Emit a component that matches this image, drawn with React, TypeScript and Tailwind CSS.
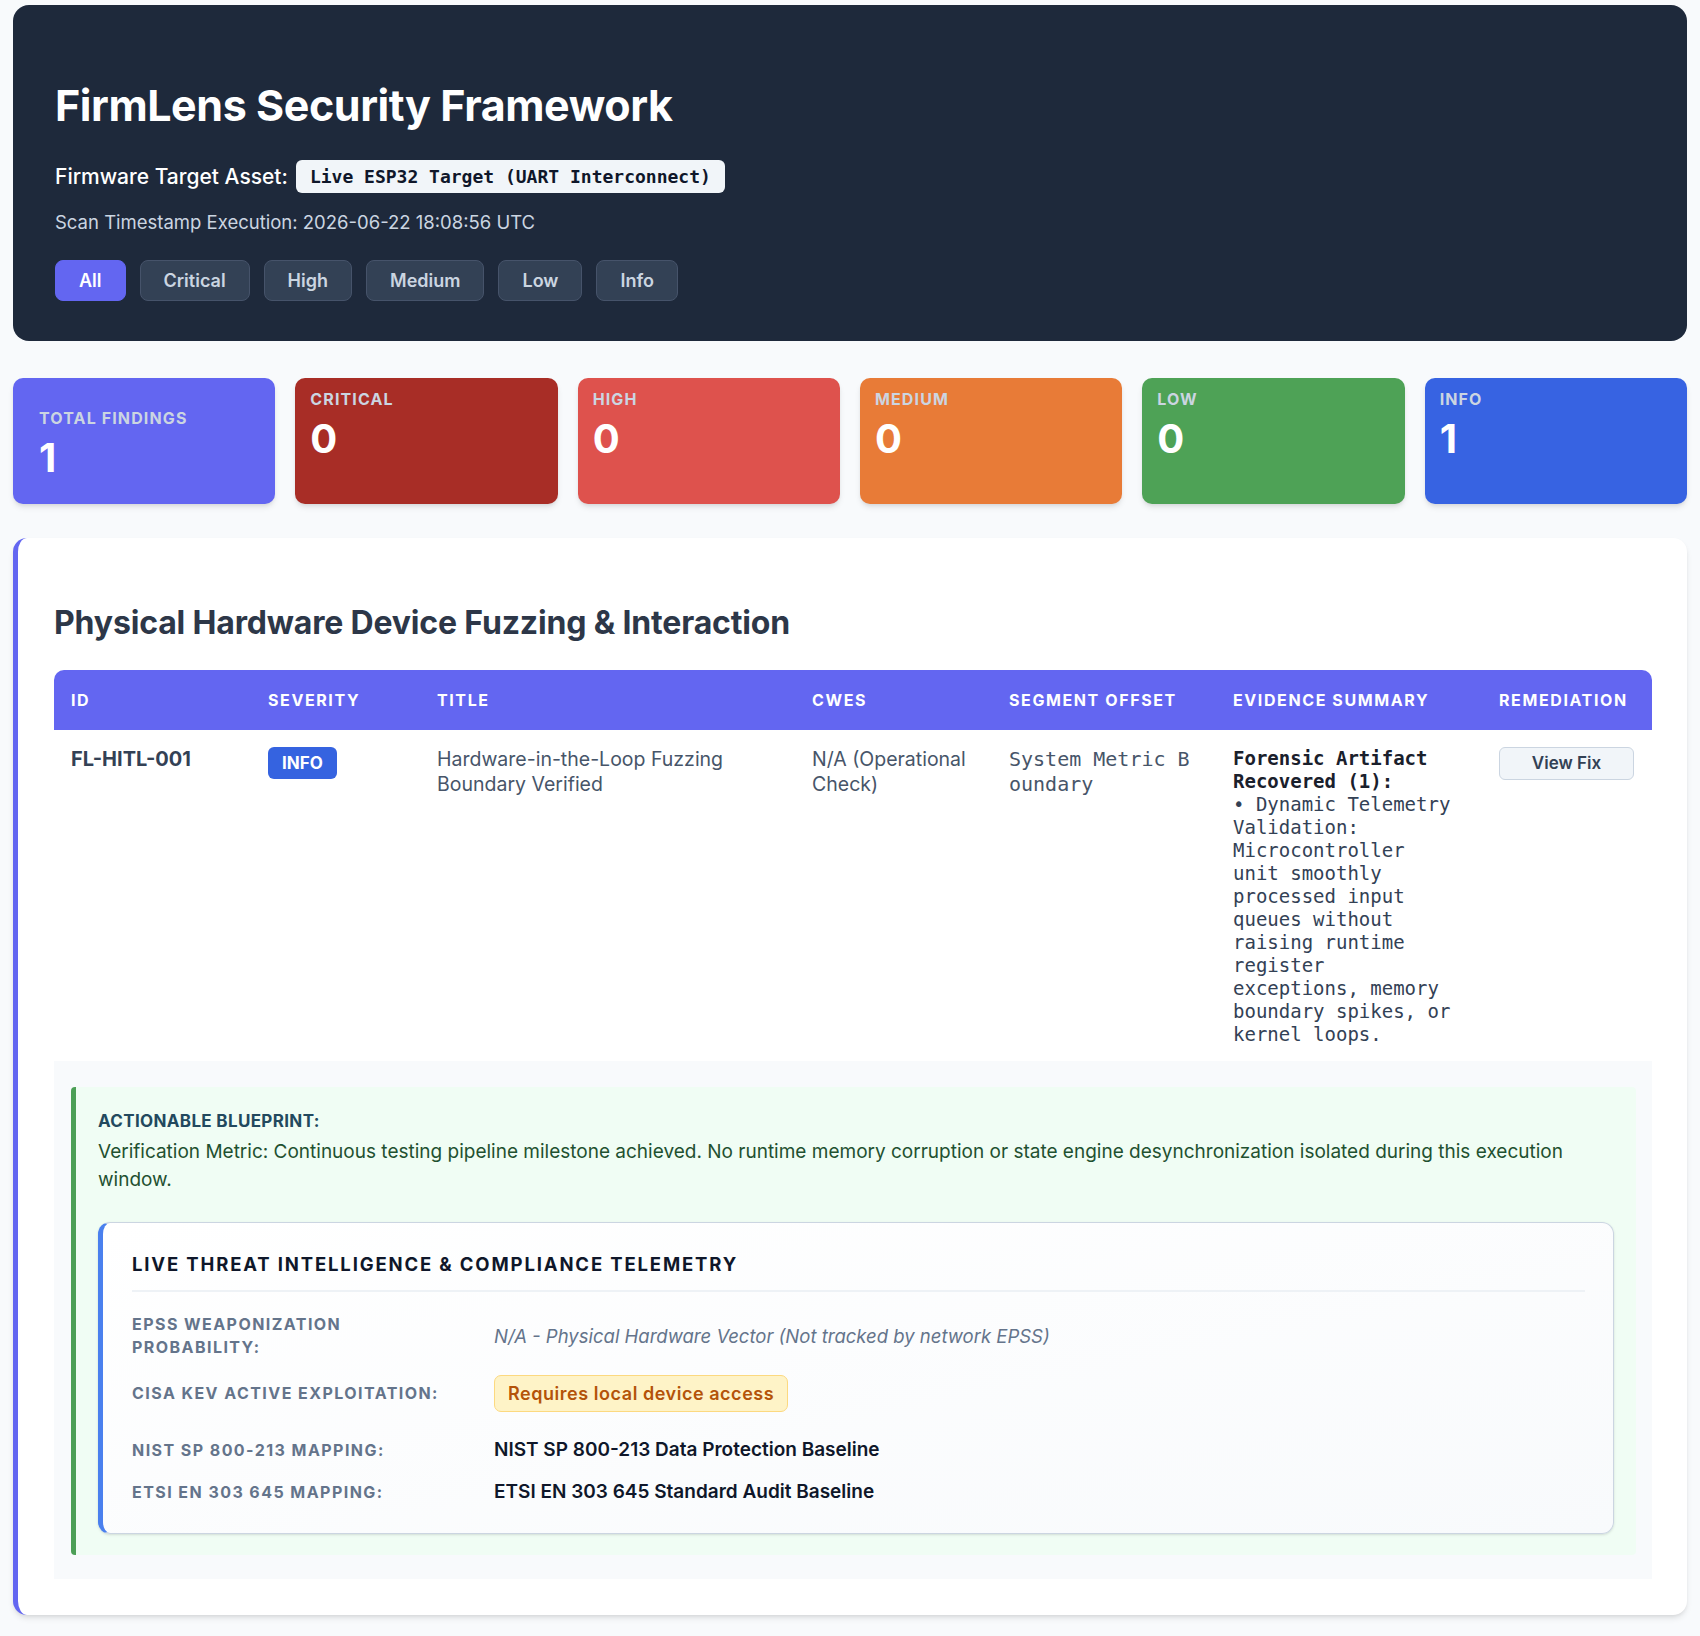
import React from 'react';

const filters = ['All', 'Critical', 'High', 'Medium', 'Low', 'Info'];

const severityCards = [
  { label: 'Critical', value: 0, bg: 'bg-[#a82d26]' },
  { label: 'High', value: 0, bg: 'bg-[#de524d]' },
  { label: 'Medium', value: 0, bg: 'bg-[#e87b37]' },
  { label: 'Low', value: 0, bg: 'bg-[#4ea256]' },
  { label: 'Info', value: 1, bg: 'bg-[#3763e2]' },
];

const columns = [
  { name: 'ID', width: 197 },
  { name: 'Severity', width: 169 },
  { name: 'Title', width: 375 },
  { name: 'CWEs', width: 197 },
  { name: 'Segment Offset', width: 224 },
  { name: 'Evidence Summary', width: 266 },
  { name: 'Remediation', width: 170 },
];

const App: React.FC = () => {
  return (
    <div className="min-h-screen bg-[#f8fafc] px-[13px] pt-[5px] pb-[21px] font-['Inter',sans-serif]">
      {/* header */}
      <header className="rounded-[16px] bg-[#1e293b] px-[42px] pt-[75px] pb-[40px] text-white">
        <h1 className="text-[43px] font-bold leading-[50px] tracking-[-0.01em]">FirmLens Security Framework</h1>
        <div className="mt-[30px] flex items-center gap-[8px]">
          <span className="text-[21px] font-medium leading-[28px]">Firmware Target Asset:</span>
          <span className="rounded-[6px] bg-[#f1f5f9] px-[14px] py-[4px] font-['DejaVu_Sans_Mono',monospace] text-[18px] font-bold leading-[25px] text-[#0f172a]">
            Live ESP32 Target (UART Interconnect)
          </span>
        </div>
        <p className="mt-[16px] text-[18.5px] leading-[26px] text-[#cbd5e1]">Scan Timestamp Execution: 2026-06-22 18:08:56 UTC</p>
        <div className="mt-[25px] flex gap-[14px]">
          {filters.map((f, i) => (
            <button
              key={f}
              className={
                i === 0
                  ? 'rounded-[8px] border border-[#6366f1] bg-[#6366f1] px-[23px] py-[8px] text-[18px] font-semibold leading-[23px] text-white'
                  : 'rounded-[8px] border border-[#46536a] bg-[#334155] px-[23px] py-[8px] text-[18px] font-semibold leading-[23px] text-[#cbd5e1]'
              }
            >
              {f}
            </button>
          ))}
        </div>
      </header>

      {/* stat cards */}
      <div className="mt-[37px] grid grid-cols-6 gap-[20px]">
        <div className="h-[126px] rounded-[10px] bg-[#6366f1] px-[26px] pt-[30px] shadow-md">
          <div className="text-[16px] font-bold uppercase leading-[20px] tracking-[0.07em] text-[#cbd5e1]">Total Findings</div>
          <div className="mt-[8px] text-[40px] font-bold leading-[44px] text-white">1</div>
        </div>
        {severityCards.map((c) => (
          <div key={c.label} className={`h-[126px] rounded-[10px] ${c.bg} px-[15px] pt-[11px] shadow-md`}>
            <div className="text-[16px] font-bold uppercase leading-[20px] tracking-[0.07em] text-[#cbd5e1]">{c.label}</div>
            <div className="mt-[8px] text-[40px] font-bold leading-[44px] text-white">{c.value}</div>
          </div>
        ))}
      </div>

      {/* findings section */}
      <section className="mt-[34px] rounded-[14px] border-l-[5px] border-[#6366f1] bg-white pt-[67px] pr-[35px] pb-[36px] pl-[36px] shadow-md">
        <h2 className="mb-[29px] text-[32px] font-bold leading-[36px] tracking-[-0.005em] text-[#2d3748]">
          Physical Hardware Device Fuzzing &amp; Interaction
        </h2>

        <table className="w-full table-fixed border-collapse">
          <colgroup>
            {columns.map((c) => (
              <col key={c.name} style={{ width: c.width }} />
            ))}
          </colgroup>
          <thead>
            <tr>
              {columns.map((c, i) => (
                <th
                  key={c.name}
                  className={`h-[60px] bg-[#6366f1] px-[17px] text-left text-[16px] font-bold uppercase tracking-[0.1em] text-white ${
                    i === 0 ? 'rounded-tl-[10px]' : ''
                  } ${i === columns.length - 1 ? 'rounded-tr-[10px]' : ''}`}
                >
                  {c.name}
                </th>
              ))}
            </tr>
          </thead>
          <tbody>
            <tr className="align-top">
              <td className="px-[17px] pt-[17px] pb-[15px] text-[20px] font-bold leading-[25px] text-[#334155]">FL-HITL-001</td>
              <td className="px-[17px] pt-[17px] pb-[15px]">
                <span className="inline-block rounded-[6px] bg-[#3563e0] px-[14px] py-[4px] text-[17px] font-bold leading-[24px] text-white">INFO</span>
              </td>
              <td className="px-[17px] pt-[17px] pb-[15px] text-[19.5px] leading-[25px] text-[#475569]">
                Hardware-in-the-Loop Fuzzing Boundary Verified
              </td>
              <td className="px-[17px] pt-[17px] pb-[15px] text-[19.5px] leading-[25px] text-[#475569]">N/A (Operational Check)</td>
              <td className="px-[17px] pt-[17px] pb-[15px]">
                <div className="w-[186px] break-all font-['DejaVu_Sans_Mono',monospace] text-[20px] leading-[25px] text-[#475569]">
                  System Metric Boundary
                </div>
              </td>
              <td className="px-[17px] pt-[17px] pb-[15px]">
                <div className="w-[222px] font-['DejaVu_Sans_Mono',monospace] text-[19px] leading-[23px] text-[#334155]">
                  <div className="font-bold text-[#1a202c]">Forensic Artifact Recovered (1):</div>
                  <div>• Dynamic Telemetry Validation: Microcontroller unit smoothly processed input queues without raising runtime register exceptions, memory boundary spikes, or kernel loops.</div>
                </div>
              </td>
              <td className="px-[17px] pt-[17px] pb-[15px]">
                <button className="h-[33px] w-[135px] rounded-[6px] border border-[#cbd5e1] bg-[#f1f5f9] text-[17px] font-semibold text-[#334155]">
                  View Fix
                </button>
              </td>
            </tr>
            <tr>
              <td colSpan={7} className="bg-[#f8fafc] pt-[26px] pr-[16px] pb-[24px] pl-[17px]">
                <div className="rounded-[4px] border-l-[5px] border-[#4c9f56] bg-[#f0fdf4] px-[22px] pt-[23px] pb-[21px]">
                  <div className="text-[17px] font-bold uppercase leading-[22px] tracking-[0.02em] text-[#22495e]">Actionable Blueprint:</div>
                  <p className="mt-[6px] text-[19px] leading-[28px] text-[#1f5130]">
                    Verification Metric: Continuous testing pipeline milestone achieved. No runtime memory corruption or state engine desynchronization isolated during this execution window.
                  </p>

                  <div className="mt-[28px] rounded-[12px] border border-l-[5px] border-[#cbd5e1] border-l-[#4a80ee] bg-gradient-to-br from-white to-[#f8fafc] pt-[29px] pr-[28px] pb-[29px] pl-[29px] shadow-sm">
                    <h3 className="border-b-2 border-[#eef2f6] pb-[14px] text-[18.5px] font-bold uppercase leading-[24px] tracking-[0.1em] text-[#0f172a]">
                      Live Threat Intelligence &amp; Compliance Telemetry
                    </h3>

                    <div className="mt-[21px] grid grid-cols-[340px_1fr] items-center gap-x-[22px]">
                      <div className="text-[16px] font-bold uppercase leading-[23px] tracking-[0.09em] text-[#64748b]">EPSS Weaponization Probability:</div>
                      <div className="text-[18.5px] italic leading-[24px] text-[#64748b]">N/A - Physical Hardware Vector (Not tracked by network EPSS)</div>
                    </div>

                    <div className="mt-[16px] grid grid-cols-[340px_1fr] items-center gap-x-[22px]">
                      <div className="text-[16px] font-bold uppercase leading-[23px] tracking-[0.09em] text-[#64748b]">CISA KEV Active Exploitation:</div>
                      <div>
                        <span className="inline-block rounded-[7px] border border-[#fcd980] bg-[#fef3c7] px-[13px] py-[6px] text-[18px] font-semibold leading-[23px] tracking-[0.03em] text-[#b45309]">
                          Requires local device access
                        </span>
                      </div>
                    </div>

                    <div className="mt-[26px] grid grid-cols-[340px_1fr] items-center gap-x-[22px]">
                      <div className="text-[16px] font-bold uppercase leading-[23px] tracking-[0.09em] text-[#64748b]">NIST SP 800-213 Mapping:</div>
                      <div className="text-[19px] font-semibold leading-[24px] text-[#0f172a]">NIST SP 800-213 Data Protection Baseline</div>
                    </div>

                    <div className="mt-[18px] grid grid-cols-[340px_1fr] items-center gap-x-[22px]">
                      <div className="text-[16px] font-bold uppercase leading-[23px] tracking-[0.09em] text-[#64748b]">ETSI EN 303 645 Mapping:</div>
                      <div className="text-[19px] font-semibold leading-[24px] text-[#0f172a]">ETSI EN 303 645 Standard Audit Baseline</div>
                    </div>
                  </div>
                </div>
              </td>
            </tr>
          </tbody>
        </table>
      </section>
    </div>
  );
};

export default App;
